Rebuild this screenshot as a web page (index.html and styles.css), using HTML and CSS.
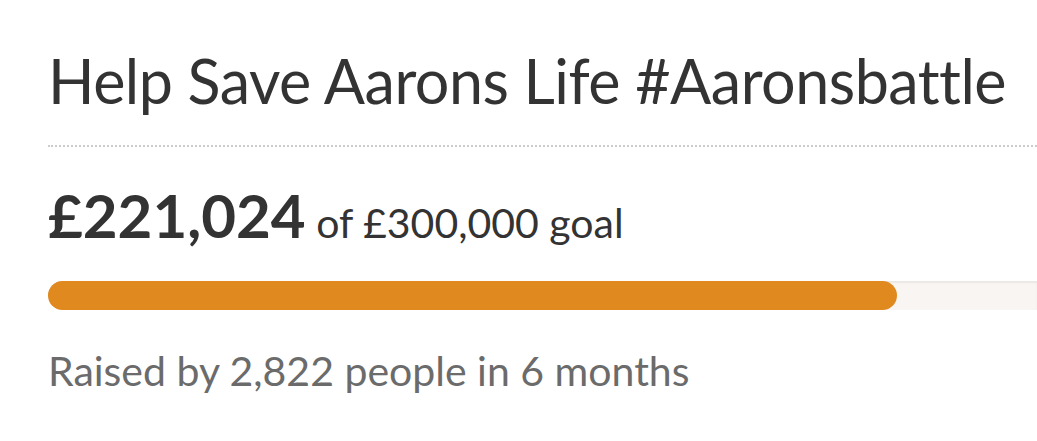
FILE: index.html
```html
<!DOCTYPE html>
<html>
<head>
<meta charset="utf-8">
<link rel="stylesheet" href="styles.css">
</head>
<body>
<div class="campaign">
  <h1 class="title">Help Save Aarons Life #Aaronsbattle</h1>
  <div class="amount"><span class="raised">£221,024</span><span class="goal"> of £300,000 goal</span></div>
  <div class="track"><div class="fill" style="width: 849px"></div></div>
  <p class="meta">Raised by 2,822 people in 6 months</p>
</div>
</body>
</html>
```

FILE: styles.css
```css
html, body {
  margin: 0;
  padding: 0;
  background: #ffffff;
  overflow: hidden;
}
.campaign {
  padding-left: 48px;
  font-family: Lato, "Open Sans", sans-serif;
}
.title {
  margin: 44px 0 0 0;
  font-size: 61px;
  line-height: 74px;
  letter-spacing: -0.5px;
  font-weight: 400;
  color: #333333;
  padding-bottom: 27px;
  border-bottom: 2px dotted #cccccc;
  white-space: nowrap;
}
.amount {
  margin-top: 32px;
  font-size: 60px;
  line-height: 72px;
  color: #333333;
  white-space: nowrap;
}
.raised {
  font-weight: 700;
}
.goal {
  font-size: 41px;
  line-height: 1;
  font-weight: 400;
}
.track {
  margin-top: 30px;
  height: 29px;
  background: #f8f5f3;
  border-radius: 15px 0 0 15px;
  box-shadow: inset 0 2px 2px rgba(0, 0, 0, 0.06);
}
.fill {
  height: 100%;
  background: #e0891f;
  border-radius: 15px;
}
.meta {
  margin: 37px 0 0 0;
  font-size: 41px;
  line-height: 48px;
  color: #6b6b6b;
  white-space: nowrap;
}
```
